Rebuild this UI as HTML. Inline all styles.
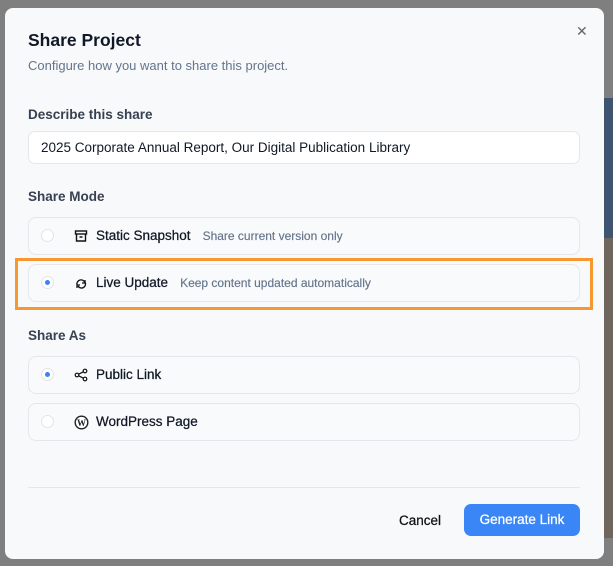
<!DOCTYPE html><html><head><style>
body{margin:0;width:613px;height:566px;overflow:hidden;background:#7f7f7f;font-family:"Liberation Sans",sans-serif;position:relative}
.bg1{position:absolute;left:604px;top:98px;width:9px;height:140px;background:#3f5470}
.bg2{position:absolute;left:604px;top:238px;width:9px;height:300px;background:#6e665c}
.m{position:absolute;left:5px;top:8px;width:599px;height:551px;background:#f8f9fb;border-radius:8px}
.a{position:absolute;white-space:nowrap}
.t{left:28px;top:30px;font-size:17.5px;font-weight:bold;color:#111827}
.s{left:28px;top:58px;font-size:13px;color:#64748b}
.l{left:28px;font-size:13.5px;font-weight:bold;color:#374151}
.in{position:absolute;left:28px;top:131px;height:31px;border:1px solid #e5e7eb;border-radius:7px;background:#fff;font-size:13.5px;color:#111827;line-height:31px;padding-left:12px;width:538px}
.o{position:absolute;left:28px;width:550px;height:36px;border:1px solid #e5e7eb;border-radius:8px;background:#f9fafb}
.r{position:absolute;left:12px;top:11px;width:13px;height:13px;border:1px solid #e2e4e8;border-radius:50%;background:#fff;box-sizing:border-box}
.r.on::after{content:"";position:absolute;left:3px;top:3px;width:5px;height:5px;border-radius:50%;background:#3b82f6}
.ic{position:absolute;left:45px;top:11px}
.n{position:absolute;left:67px;top:10px;font-size:13.5px;color:#111827;white-space:nowrap;-webkit-text-stroke:0.25px #111827}
.d{font-size:12px;color:#64748b;margin-left:12px;-webkit-text-stroke:0.15px #64748b}
</style></head><body>
<div class="bg1"></div><div class="bg2"></div>
<div class="m"></div>
<div class="a" style="left:576px;top:23px;font-size:14px;color:#666">✕</div>
<div class="a t">Share Project</div>
<div class="a s">Configure how you want to share this project.</div>
<div class="a l" style="top:107px">Describe this share</div>
<div class="in">2025 Corporate Annual Report, Our Digital Publication Library</div>
<div class="a l" style="top:189px">Share Mode</div>
<div class="o" style="top:217px"><div class="r"></div>
<svg class="ic" width="14" height="14" viewBox="0 0 14 14" fill="none" stroke="#111" stroke-width="1.4"><rect x="1.5" y="2" width="11" height="3"/><path d="M2.5 5v7h9V5M5.5 8h3"/></svg>
<div class="n">Static Snapshot<span class="d">Share current version only</span></div></div>
<div class="o" style="top:264px"><div class="r on"></div>
<svg class="ic" width="14" height="14" viewBox="0 0 14 14" fill="none" stroke="#111" stroke-width="1.3"><path d="M3 9a4 4 0 1 1 8-2M11 4v3H8M11 6a4 4 0 0 1-7 4M3 12V9h3"/></svg>
<div class="n">Live Update<span class="d">Keep content updated automatically</span></div></div>
<div style="position:absolute;left:15px;top:258px;width:572px;height:46px;border:3px solid #f7972f"></div>
<div class="a l" style="top:328px">Share As</div>
<div class="o" style="top:356px"><div class="r on"></div>
<svg class="ic" width="14" height="14" viewBox="0 0 14 14" fill="none" stroke="#111" stroke-width="1.2"><circle cx="3" cy="7" r="1.8"/><circle cx="11" cy="3" r="1.8"/><circle cx="11" cy="11" r="1.8"/><path d="M4.6 6.2l4.8-2.4M4.6 7.8l4.8 2.4"/></svg>
<div class="n">Public Link</div></div>
<div class="o" style="top:403px"><div class="r"></div>
<svg class="ic" width="15" height="15" viewBox="0 0 15 15"><circle cx="7.5" cy="7.5" r="7" fill="#222"/><circle cx="7.5" cy="7.5" r="5.6" fill="#fff"/><text x="7.5" y="11" font-size="9" font-weight="bold" text-anchor="middle" fill="#222" font-family="Liberation Serif">W</text></svg>
<div class="n">WordPress Page</div></div>
<div style="position:absolute;left:28px;top:487px;width:552px;height:1px;background:#e5e7eb"></div>
<div class="a" style="left:399px;top:513px;font-size:13.5px;color:#111;-webkit-text-stroke:0.25px #111">Cancel</div>
<div style="position:absolute;left:464px;top:504px;width:116px;height:32px;background:#3b86f7;border-radius:7px;color:#fff;font-size:13.5px;text-align:center;line-height:32px;-webkit-text-stroke:0.25px #fff">Generate Link</div>
</body></html>
